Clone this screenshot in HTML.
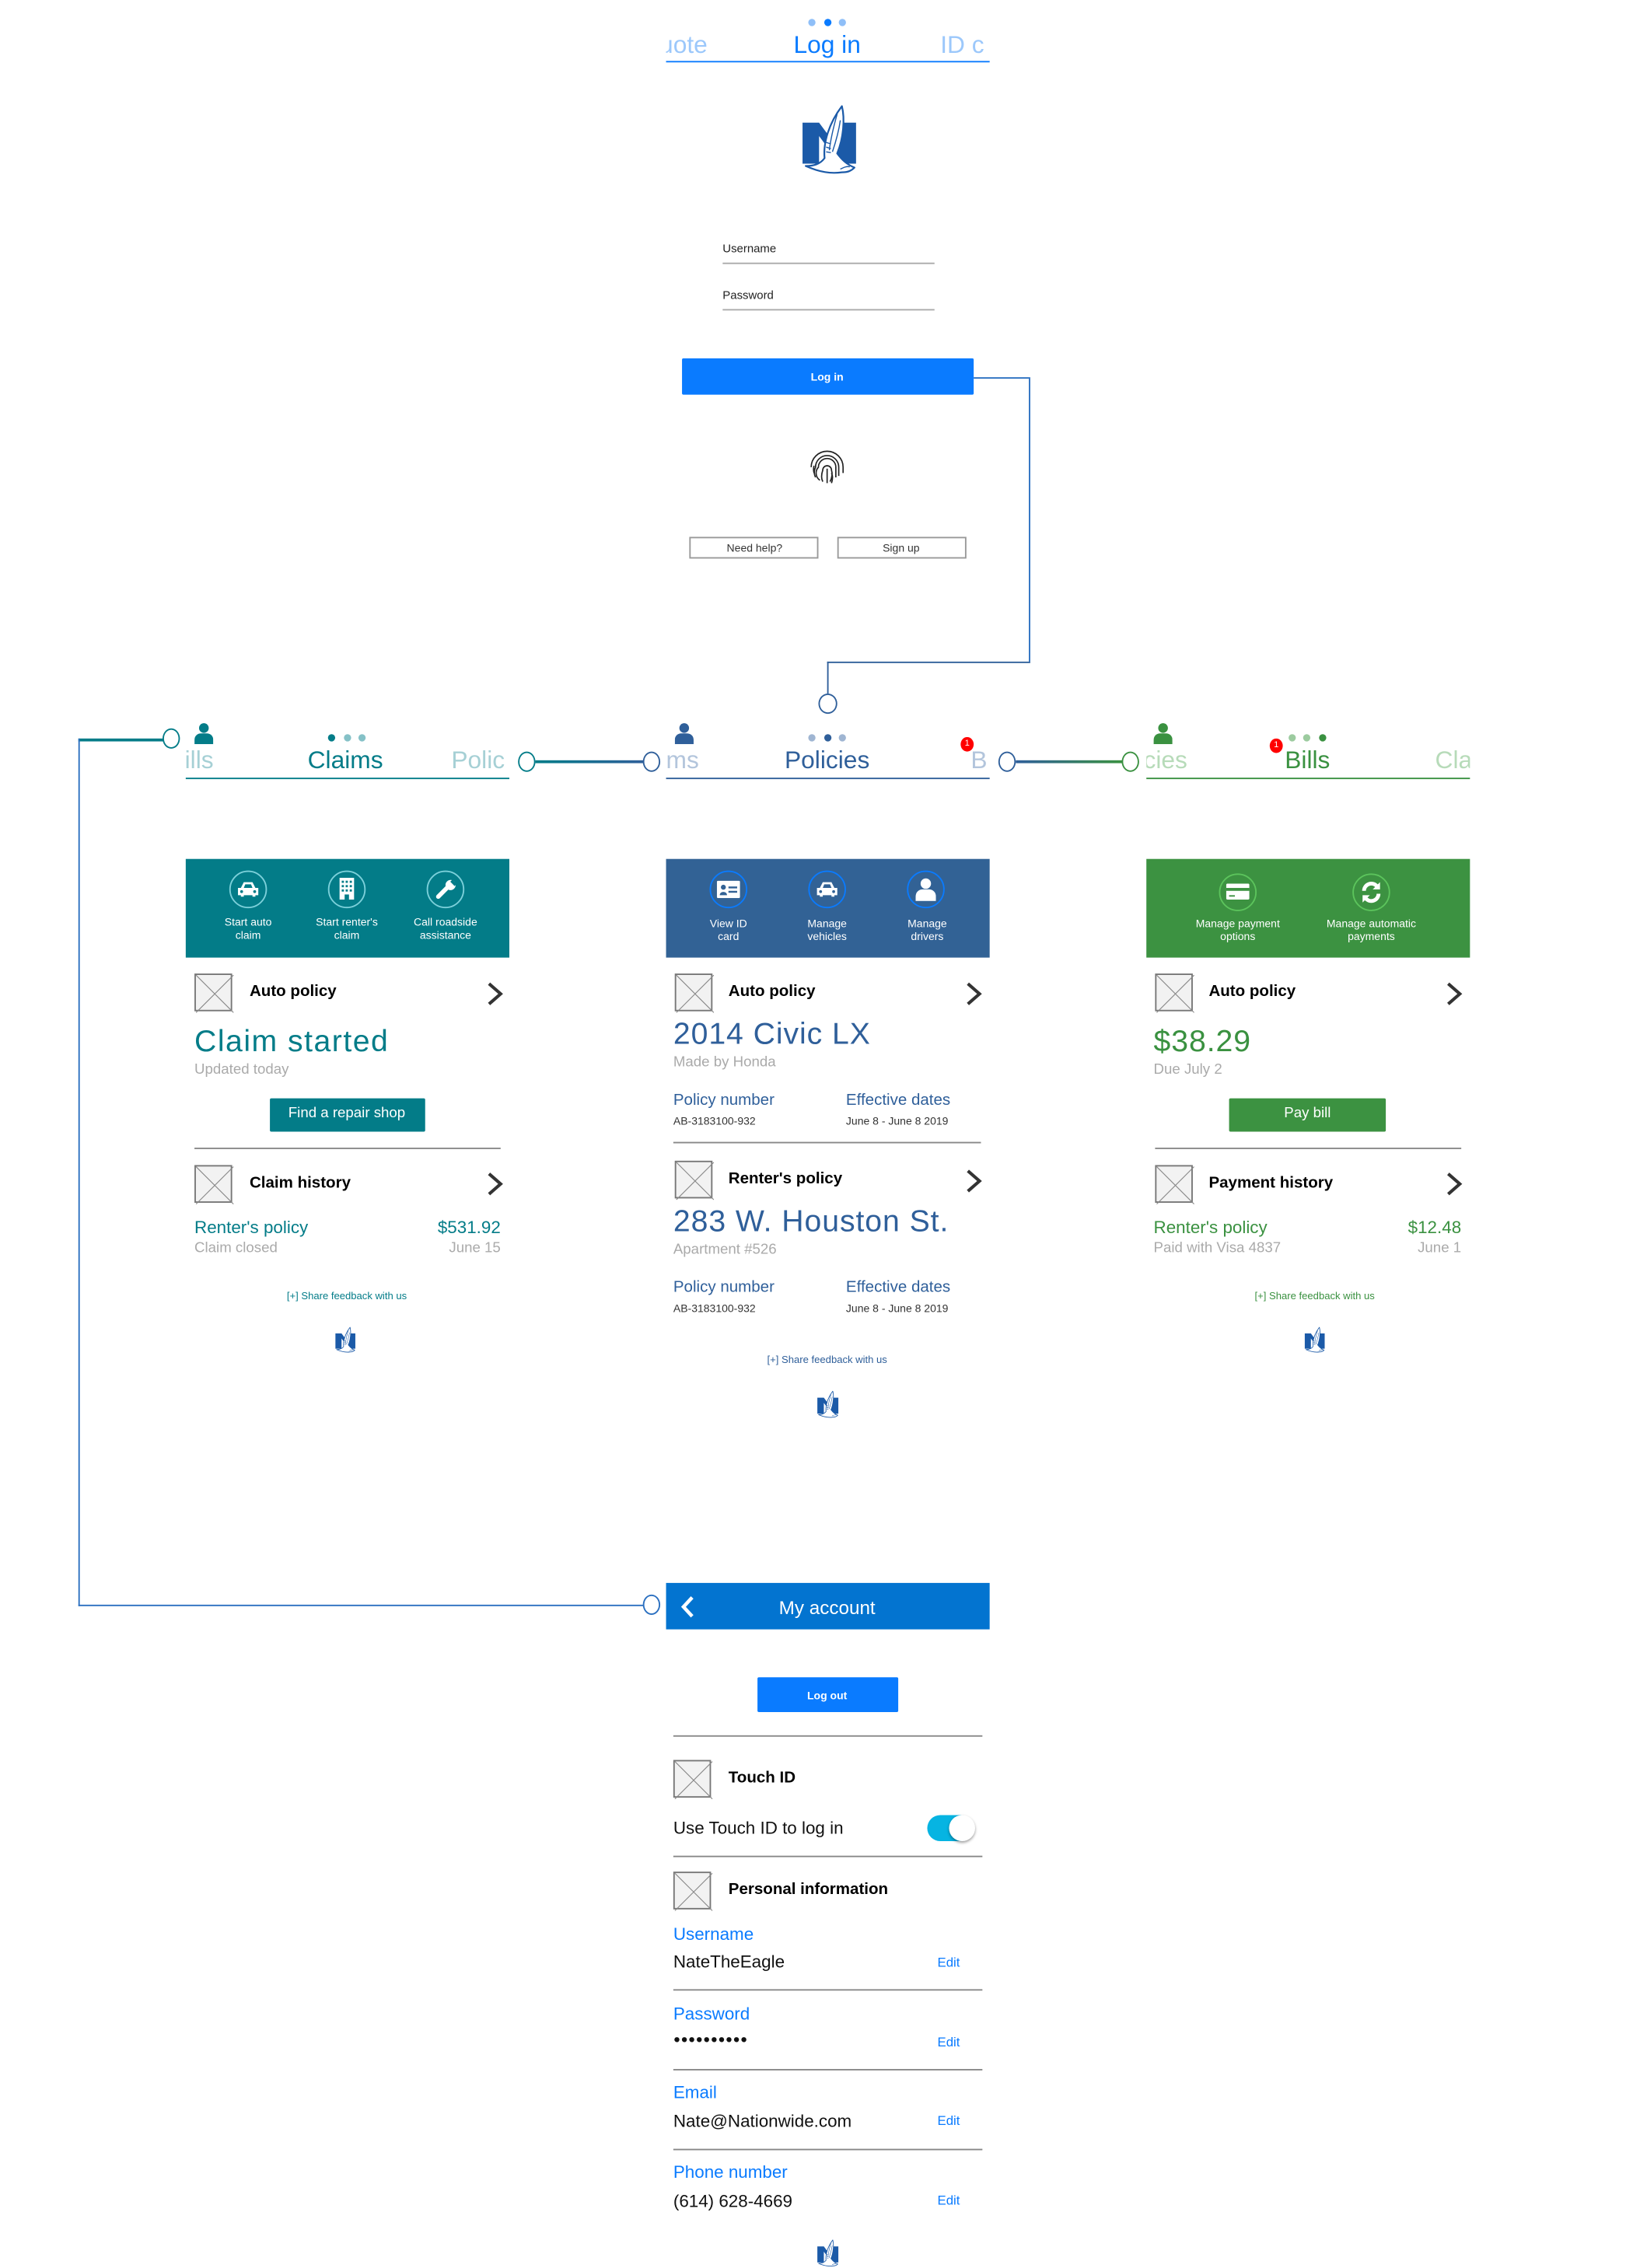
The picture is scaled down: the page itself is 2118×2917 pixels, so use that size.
<!DOCTYPE html>
<html><head><meta charset="utf-8">
<style>
html,body{margin:0;padding:0;background:#fff;width:2118px;height:2911px;overflow:hidden}
#w{position:absolute;left:0;top:0;width:1135px;height:1560px;transform:scale(1.86608);transform-origin:0 0;font-family:"Liberation Sans",sans-serif}
.t{position:absolute;white-space:nowrap;line-height:1;transform:translateY(-50%)}
.c{text-align:center;transform:translate(-50%,-50%)}
.r{transform:translate(-100%,-50%)}
.a{position:absolute}
.ph{position:absolute;width:26px;height:26px;background:#f2f2f2;border:1px solid #777;box-sizing:border-box}
.ph svg{position:absolute;left:0;top:0}
.b{font-weight:bold;font-size:11px;color:#000}
.hr{position:absolute;height:1px;background:#888}
.clip{position:absolute;overflow:hidden}
.circ{position:absolute;width:12px;height:12px;border-radius:50%;border:1.5px solid;background:#fff;box-sizing:border-box}
.dot{position:absolute;width:5px;height:5px;border-radius:50%}
.ibtn{position:absolute;width:26px;height:26px;border-radius:50%;border:1.5px solid;box-sizing:border-box}
.sm{font-size:7.5px;color:#fff;line-height:9px;text-align:center;position:absolute;transform:translateX(-50%);white-space:nowrap}
</style></head><body><div id="w">
<svg width="0" height="0" style="position:absolute">
<defs>
<symbol id="logo" viewBox="0 0 68 94">
<path d="M0 25H21L47 60V25H68V77H47L21 42V77H0z" fill="#1b5aa8"/>
<path d="M28 70C26 50 34 25 50 4C54 20 52 45 44 64C50 72 56 78 66 82C62 86 58 88 50 88C36 90 22 88 4 80C14 80 22 78 28 70z" fill="#fff" stroke="#1b5aa8" stroke-width="2.2" stroke-linejoin="round"/>
<path d="M44 14C40 28 36 44 34 60M48 22C46 36 42 50 38 62M30 50l6 2M30 56l6 2M30 62l6 1M48 84c4-2 8-4 12-3" stroke="#1b5aa8" fill="none" stroke-width="1.4"/>
</symbol>
<symbol id="x" viewBox="0 0 26 26"><path d="M0 0L26 26M26 0L0 26" stroke="#888" stroke-width="0.6"/></symbol>
<symbol id="chev" viewBox="0 0 12 18"><path d="M2 2l8 7-8 7" fill="none" stroke="#333" stroke-width="2.2"/></symbol>
<symbol id="person" viewBox="0 0 14 16"><circle cx="7" cy="4" r="3.6"/><path d="M0 16v-3c0-3 2-5 5-5h4c3 0 5 2 5 5v3z"/></symbol>
</defs></svg>

<!-- ============ LOGIN ============ -->
<div class="clip" style="left:459px;top:0;width:223px;height:44px">
 <div class="t" style="left:-14px;top:31px;font-size:17px;color:#9cc8fb">quote</div>
 <div class="t c" style="left:111px;top:31px;font-size:17px;color:#0a7bff">Log in</div>
 <div class="t" style="left:189px;top:31px;font-size:17px;color:#9cc8fb">ID c</div>
</div>
<div class="dot" style="left:557px;top:13px;background:#8fbff8"></div>
<div class="dot" style="left:568px;top:13px;background:#0a7bff"></div>
<div class="dot" style="left:578px;top:13px;background:#8fbff8"></div>
<div class="a" style="left:459px;top:42px;width:223px;height:1px;background:#0a7bff"></div>
<svg class="a" style="left:553px;top:71px" width="37" height="51"><use href="#logo"/></svg>
<div class="t" style="left:498px;top:172px;font-size:8px;color:#222">Username</div>
<div class="a" style="left:498px;top:181px;width:146px;height:1px;background:#aaa"></div>
<div class="t" style="left:498px;top:204px;font-size:8px;color:#222">Password</div>
<div class="a" style="left:498px;top:213px;width:146px;height:1px;background:#aaa"></div>
<div class="a" style="left:470px;top:247px;width:201px;height:25px;background:#0a7bff;border-radius:1px"></div>
<div class="t c" style="left:570px;top:260px;font-size:7.5px;color:#fff;font-weight:bold">Log in</div>
<svg class="a" style="left:557px;top:309px" width="26" height="26" viewBox="0 0 26 26" fill="none" stroke="#222" stroke-width="0.9">
<path d="M2 13a11 11 0 0 1 22 0M4 17a9 9 0 0 1 0-5M24 13v4M5 20a8 8 0 0 1 0-7 8 8 0 0 1 16 0v6M8 22a6 6 0 0 1-1-9 6 6 0 0 1 12 0v7M10 23c-1-2-1-5 0-8a3 3 0 0 1 6 0c1 3 0 6-1 8M13 14v10M16 24c1-3 1-5 0-7"/></svg>
<div class="a" style="left:475px;top:370px;width:89px;height:15px;border:1px solid #999;box-sizing:border-box"></div>
<div class="t c" style="left:520px;top:378px;font-size:7.5px;color:#333">Need help?</div>
<div class="a" style="left:577px;top:370px;width:89px;height:15px;border:1px solid #999;box-sizing:border-box"></div>
<div class="t c" style="left:621px;top:378px;font-size:7.5px;color:#333">Sign up</div>

<!-- connectors -->
<div class="a" style="left:671px;top:260px;width:38px;height:1px;background:#2a6fc0"></div>
<div class="a" style="left:709px;top:260px;width:1px;height:196px;background:#2a6fc0"></div>
<div class="a" style="left:570px;top:456px;width:140px;height:1px;background:#2f5f9a"></div>
<div class="a" style="left:570px;top:456px;width:1px;height:22px;background:#2f5f9a"></div>
<div class="circ" style="left:564px;top:478px;border-color:#2f5f9a;width:13px;height:14px"></div>
<div class="a" style="left:54px;top:509px;width:60px;height:1.5px;background:#037c88"></div>
<div class="a" style="left:54px;top:509px;width:1px;height:598px;background:#2a6fc0"></div>
<div class="a" style="left:54px;top:1106px;width:390px;height:1px;background:#2a6fc0"></div>
<div class="circ" style="left:112px;top:502px;border-color:#037c88;height:14px"></div>
<div class="circ" style="left:357px;top:518px;border-color:#037c88;height:14px"></div>
<div class="a" style="left:369px;top:524px;width:75px;height:2px;background:linear-gradient(90deg,#037c88,#2f5f9a)"></div>
<div class="circ" style="left:443px;top:518px;border-color:#2f5f9a;height:14px"></div>
<div class="circ" style="left:688px;top:518px;border-color:#2f5f9a;height:14px"></div>
<div class="a" style="left:700px;top:524px;width:74px;height:2px;background:linear-gradient(90deg,#2f5f9a,#3a9140)"></div>
<div class="circ" style="left:773px;top:518px;border-color:#3a9140;height:14px"></div>
<div class="circ" style="left:443px;top:1099px;border-color:#2a6fc0;height:14px"></div>

<!-- ============ CLAIMS ============ -->
<svg class="a" style="left:134px;top:498px;fill:#037c88" width="13" height="15"><use href="#person"/></svg>
<div class="clip" style="left:128px;top:505px;width:223px;height:32px">
 <div class="t" style="left:-12px;top:19px;font-size:17px;color:#a6d0d5">Bills</div>
 <div class="t c" style="left:110px;top:19px;font-size:17px;color:#037c88">Claims</div>
 <div class="t" style="left:183px;top:19px;font-size:17px;color:#a6d0d5">Polic</div>
</div>
<div class="dot" style="left:226px;top:506px;background:#037c88"></div>
<div class="dot" style="left:237px;top:506px;background:#85c1c7"></div>
<div class="dot" style="left:247px;top:506px;background:#85c1c7"></div>
<div class="a" style="left:128px;top:536px;width:223px;height:1px;background:#037c88"></div>
<div class="a" style="left:128px;top:592px;width:223px;height:68px;background:#037c88"></div>
<div class="ibtn" style="left:158px;top:600px;border-color:#7cd0da"></div>
<div class="ibtn" style="left:226px;top:600px;border-color:#7cd0da"></div>
<div class="ibtn" style="left:294px;top:600px;border-color:#7cd0da"></div>
<svg class="a" style="left:163px;top:607px" width="16" height="12" viewBox="0 0 16 12" fill="#fff"><path d="M3 5l2-4h6l2 4h2v5h-2v1h-2v-1H5v1H3v-1H1V5z"/><path d="M5 5l1-2.5h4l1 2.5z" fill="#037c88"/><circle cx="3.5" cy="7.5" r="1" fill="#037c88"/><circle cx="12.5" cy="7.5" r="1" fill="#037c88"/></svg>
<svg class="a" style="left:233px;top:605px" width="12" height="16" viewBox="0 0 12 16"><rect x="1" y="0" width="10" height="15" fill="#fff"/><g fill="#037c88"><rect x="2.5" y="2" width="1.5" height="1.5"/><rect x="5.2" y="2" width="1.5" height="1.5"/><rect x="8" y="2" width="1.5" height="1.5"/><rect x="2.5" y="5" width="1.5" height="1.5"/><rect x="5.2" y="5" width="1.5" height="1.5"/><rect x="8" y="5" width="1.5" height="1.5"/><rect x="2.5" y="8" width="1.5" height="1.5"/><rect x="5.2" y="8" width="1.5" height="1.5"/><rect x="8" y="8" width="1.5" height="1.5"/><rect x="4.5" y="11.5" width="3" height="3.5"/></g></svg>
<svg class="a" style="left:300px;top:606px" width="15" height="14" viewBox="0 0 15 14"><path d="M2 12L8 6" stroke="#fff" stroke-width="3" stroke-linecap="round"/><circle cx="10.5" cy="4" r="3.5" fill="#fff"/><path d="M11 1l3 3" stroke="#037c88" stroke-width="2"/></svg>
<div class="sm" style="left:171px;top:631px">Start auto<br>claim</div>
<div class="sm" style="left:239px;top:631px">Start renter's<br>claim</div>
<div class="sm" style="left:307px;top:631px">Call roadside<br>assistance</div>
<div class="ph" style="left:134px;top:671px"><svg width="26" height="26"><use href="#x"/></svg></div>
<div class="t b" style="left:172px;top:684px">Auto policy</div>
<svg class="a" style="left:335px;top:676px" width="12" height="18"><use href="#chev"/></svg>
<div class="t" style="left:134px;top:718px;font-size:21px;color:#037c88;letter-spacing:0.8px">Claim started</div>
<div class="t" style="left:134px;top:738px;font-size:10px;color:#aaa">Updated today</div>
<div class="a" style="left:186px;top:757px;width:107px;height:23px;background:#037c88;border-radius:1px"></div>
<div class="t c" style="left:239px;top:768px;font-size:10px;color:#fff">Find a repair shop</div>
<div class="hr" style="left:134px;top:791px;width:211px"></div>
<div class="ph" style="left:134px;top:803px"><svg width="26" height="26"><use href="#x"/></svg></div>
<div class="t b" style="left:172px;top:816px">Claim history</div>
<svg class="a" style="left:335px;top:807px" width="12" height="18"><use href="#chev"/></svg>
<div class="t" style="left:134px;top:846px;font-size:12px;color:#037c88">Renter's policy</div>
<div class="t r" style="left:345px;top:846px;font-size:12px;color:#037c88">$531.92</div>
<div class="t" style="left:134px;top:861px;font-size:10px;color:#aaa">Claim closed</div>
<div class="t r" style="left:345px;top:861px;font-size:10px;color:#aaa">June 15</div>
<div class="t c" style="left:239px;top:894px;font-size:7px;color:#037c88">[+] Share feedback with us</div>
<svg class="a" style="left:231px;top:914px" width="14" height="19"><use href="#logo"/></svg>

<!-- ============ POLICIES ============ -->
<svg class="a" style="left:465px;top:498px;fill:#2f5f9a" width="13" height="15"><use href="#person"/></svg>
<div class="clip" style="left:459px;top:505px;width:223px;height:32px">
 <div class="t" style="left:0px;top:19px;font-size:17px;color:#b3c5dc">ms</div>
 <div class="t c" style="left:111px;top:19px;font-size:17px;color:#2f5f9a">Policies</div>
 <div class="t" style="left:210px;top:19px;font-size:17px;color:#b3c5dc">B</div>
</div>
<div class="dot" style="left:557px;top:506px;background:#9fb5d2"></div>
<div class="dot" style="left:568px;top:506px;background:#2f5f9a"></div>
<div class="dot" style="left:578px;top:506px;background:#9fb5d2"></div>
<div class="a" style="left:662px;top:508px;width:9px;height:10px;border-radius:50%;background:#f00;color:#fff;font-size:6px;text-align:center;line-height:10px">1</div>
<div class="a" style="left:459px;top:536px;width:223px;height:1px;background:#2f5f9a"></div>
<div class="a" style="left:459px;top:592px;width:223px;height:68px;background:#326295"></div>
<div class="ibtn" style="left:489px;top:600px;border-color:#0a7bff"></div>
<div class="ibtn" style="left:557px;top:600px;border-color:#0a7bff"></div>
<div class="ibtn" style="left:625px;top:600px;border-color:#0a7bff"></div>
<svg class="a" style="left:494px;top:607px" width="16" height="12" viewBox="0 0 16 12"><rect x="0" y="0" width="16" height="12" rx="1" fill="#fff"/><circle cx="4.5" cy="4.5" r="1.7" fill="#326295"/><path d="M2 10c0-3 5-3 5 0z" fill="#326295"/><rect x="8" y="4" width="6" height="1.3" fill="#326295"/><rect x="8" y="7" width="6" height="1.3" fill="#326295"/></svg>
<svg class="a" style="left:562px;top:607px" width="16" height="12" viewBox="0 0 16 12" fill="#fff"><path d="M3 5l2-4h6l2 4h2v5h-2v1h-2v-1H5v1H3v-1H1V5z"/><path d="M5 5l1-2.5h4l1 2.5z" fill="#326295"/><circle cx="3.5" cy="7.5" r="1" fill="#326295"/><circle cx="12.5" cy="7.5" r="1" fill="#326295"/></svg>
<svg class="a" style="left:631px;top:605px;fill:#fff" width="14" height="16"><use href="#person"/></svg>
<div class="sm" style="left:502px;top:632px">View ID<br>card</div>
<div class="sm" style="left:570px;top:632px">Manage<br>vehicles</div>
<div class="sm" style="left:639px;top:632px">Manage<br>drivers</div>
<div class="ph" style="left:465px;top:671px"><svg width="26" height="26"><use href="#x"/></svg></div>
<div class="t b" style="left:502px;top:684px">Auto policy</div>
<svg class="a" style="left:665px;top:676px" width="12" height="18"><use href="#chev"/></svg>
<div class="t" style="left:464px;top:713px;font-size:21px;color:#2f5f9a;letter-spacing:0.5px">2014 Civic LX</div>
<div class="t" style="left:464px;top:733px;font-size:10px;color:#aaa">Made by Honda</div>
<div class="t" style="left:464px;top:759px;font-size:11px;color:#2f5f9a">Policy number</div>
<div class="t" style="left:583px;top:759px;font-size:11px;color:#2f5f9a">Effective dates</div>
<div class="t" style="left:464px;top:773px;font-size:7.5px;color:#333">AB-3183100-932</div>
<div class="t" style="left:583px;top:773px;font-size:7.5px;color:#333">June 8 - June 8 2019</div>
<div class="hr" style="left:464px;top:787px;width:212px"></div>
<div class="ph" style="left:465px;top:800px"><svg width="26" height="26"><use href="#x"/></svg></div>
<div class="t b" style="left:502px;top:813px">Renter's policy</div>
<svg class="a" style="left:665px;top:805px" width="12" height="18"><use href="#chev"/></svg>
<div class="t" style="left:464px;top:842px;font-size:21px;color:#2f5f9a;letter-spacing:0.5px">283 W. Houston St.</div>
<div class="t" style="left:464px;top:862px;font-size:10px;color:#aaa">Apartment #526</div>
<div class="t" style="left:464px;top:888px;font-size:11px;color:#2f5f9a">Policy number</div>
<div class="t" style="left:583px;top:888px;font-size:11px;color:#2f5f9a">Effective dates</div>
<div class="t" style="left:464px;top:902px;font-size:7.5px;color:#333">AB-3183100-932</div>
<div class="t" style="left:583px;top:902px;font-size:7.5px;color:#333">June 8 - June 8 2019</div>
<div class="t c" style="left:570px;top:938px;font-size:7px;color:#2f5f9a">[+] Share feedback with us</div>
<svg class="a" style="left:563px;top:958px" width="15" height="20"><use href="#logo"/></svg>

<!-- ============ BILLS ============ -->
<svg class="a" style="left:795px;top:498px;fill:#3a9140" width="13" height="15"><use href="#person"/></svg>
<div class="clip" style="left:790px;top:505px;width:223px;height:32px">
 <div class="t" style="left:-2px;top:19px;font-size:17px;color:#b7dbb9">cies</div>
 <div class="t c" style="left:111px;top:19px;font-size:17px;color:#3a9140">Bills</div>
 <div class="t" style="left:199px;top:19px;font-size:17px;color:#b7dbb9">Cla</div>
</div>
<div class="a" style="left:875px;top:509px;width:9px;height:10px;border-radius:50%;background:#f00;color:#fff;font-size:6px;text-align:center;line-height:10px">1</div>
<div class="dot" style="left:888px;top:506px;background:#9ccb9f"></div>
<div class="dot" style="left:898px;top:506px;background:#9ccb9f"></div>
<div class="dot" style="left:909px;top:506px;background:#3a9140"></div>
<div class="a" style="left:790px;top:536px;width:223px;height:1px;background:#3a9140"></div>
<div class="a" style="left:790px;top:592px;width:223px;height:68px;background:#3c9241"></div>
<div class="ibtn" style="left:840px;top:602px;border-color:#5cc45c"></div>
<div class="ibtn" style="left:932px;top:602px;border-color:#5cc45c"></div>
<svg class="a" style="left:845px;top:609px" width="16" height="12" viewBox="0 0 16 12"><rect x="0" y="0" width="16" height="11" rx="1" fill="#fff"/><rect x="0" y="3" width="16" height="2" fill="#3c9241"/><rect x="2" y="8" width="4" height="1" fill="#3c9241"/></svg>
<svg class="a" style="left:937px;top:607px" width="16" height="16" viewBox="0 0 16 16" fill="none" stroke="#fff" stroke-width="2.6"><path d="M3 7a5 5 0 0 1 9-3"/><path d="M13 9a5 5 0 0 1-9 3"/><path d="M14 1v5h-5z" fill="#fff" stroke="none"/><path d="M2 15v-5h5z" fill="#fff" stroke="none"/></svg>
<div class="sm" style="left:853px;top:632px">Manage payment<br>options</div>
<div class="sm" style="left:945px;top:632px">Manage automatic<br>payments</div>
<div class="ph" style="left:796px;top:671px"><svg width="26" height="26"><use href="#x"/></svg></div>
<div class="t b" style="left:833px;top:684px">Auto policy</div>
<svg class="a" style="left:996px;top:676px" width="12" height="18"><use href="#chev"/></svg>
<div class="t" style="left:795px;top:718px;font-size:21px;color:#3a9140;letter-spacing:0.5px">$38.29</div>
<div class="t" style="left:795px;top:738px;font-size:10px;color:#aaa">Due July 2</div>
<div class="a" style="left:847px;top:757px;width:108px;height:23px;background:#3c9241;border-radius:1px"></div>
<div class="t c" style="left:901px;top:768px;font-size:10px;color:#fff">Pay bill</div>
<div class="hr" style="left:796px;top:791px;width:211px"></div>
<div class="ph" style="left:796px;top:803px"><svg width="26" height="26"><use href="#x"/></svg></div>
<div class="t b" style="left:833px;top:816px">Payment history</div>
<svg class="a" style="left:996px;top:807px" width="12" height="18"><use href="#chev"/></svg>
<div class="t" style="left:795px;top:846px;font-size:12px;color:#3a9140">Renter's policy</div>
<div class="t r" style="left:1007px;top:846px;font-size:12px;color:#3a9140">$12.48</div>
<div class="t" style="left:795px;top:861px;font-size:10px;color:#aaa">Paid with Visa 4837</div>
<div class="t r" style="left:1007px;top:861px;font-size:10px;color:#aaa">June 1</div>
<div class="t c" style="left:906px;top:894px;font-size:7px;color:#3a9140">[+] Share feedback with us</div>
<svg class="a" style="left:899px;top:914px" width="14" height="19"><use href="#logo"/></svg>

<!-- ============ MY ACCOUNT ============ -->
<div class="a" style="left:459px;top:1091px;width:223px;height:32px;background:#0374d0"></div>
<svg class="a" style="left:468px;top:1099px" width="12" height="17" viewBox="0 0 12 17"><path d="M9 2L3 8.5 9 15" fill="none" stroke="#fff" stroke-width="2.4"/></svg>
<div class="t c" style="left:570px;top:1108px;font-size:13px;color:#fff">My account</div>
<div class="a" style="left:522px;top:1156px;width:97px;height:24px;background:#0a7bff;border-radius:1px"></div>
<div class="t c" style="left:570px;top:1169px;font-size:7.5px;color:#fff;font-weight:bold">Log out</div>
<div class="hr" style="left:464px;top:1196px;width:213px"></div>
<div class="ph" style="left:464px;top:1213px"><svg width="26" height="26"><use href="#x"/></svg></div>
<div class="t b" style="left:502px;top:1226px">Touch ID</div>
<div class="t" style="left:464px;top:1260px;font-size:12px;color:#111">Use Touch ID to log in</div>
<div class="a" style="left:639px;top:1251px;width:32px;height:18px;border-radius:9px;background:#06b4e2"></div>
<div class="a" style="left:654px;top:1251px;width:18px;height:18px;border-radius:50%;background:#fff;box-shadow:0 1px 2px rgba(0,0,0,.4)"></div>
<div class="hr" style="left:464px;top:1279px;width:213px"></div>
<div class="ph" style="left:464px;top:1290px"><svg width="26" height="26"><use href="#x"/></svg></div>
<div class="t b" style="left:502px;top:1303px">Personal information</div>
<div class="t" style="left:464px;top:1333px;font-size:12px;color:#0a7bff">Username</div>
<div class="t" style="left:464px;top:1352px;font-size:12px;color:#111">NateTheEagle</div>
<div class="t" style="left:646px;top:1353px;font-size:9px;color:#0a7bff">Edit</div>
<div class="hr" style="left:464px;top:1371px;width:213px"></div>
<div class="t" style="left:464px;top:1388px;font-size:12px;color:#0a7bff">Password</div>
<div class="t" style="left:464px;top:1406px;font-size:8px;color:#111;letter-spacing:0.3px">●●●●●●●●●●</div>
<div class="t" style="left:646px;top:1408px;font-size:9px;color:#0a7bff">Edit</div>
<div class="hr" style="left:464px;top:1426px;width:213px"></div>
<div class="t" style="left:464px;top:1442px;font-size:12px;color:#0a7bff">Email</div>
<div class="t" style="left:464px;top:1462px;font-size:12px;color:#111">Nate@Nationwide.com</div>
<div class="t" style="left:646px;top:1462px;font-size:9px;color:#0a7bff">Edit</div>
<div class="hr" style="left:464px;top:1481px;width:213px"></div>
<div class="t" style="left:464px;top:1497px;font-size:12px;color:#0a7bff">Phone number</div>
<div class="t" style="left:464px;top:1517px;font-size:12px;color:#111">(614) 628-4669</div>
<div class="t" style="left:646px;top:1517px;font-size:9px;color:#0a7bff">Edit</div>
<svg class="a" style="left:563px;top:1543px" width="15" height="20"><use href="#logo"/></svg>
</div></body></html>
